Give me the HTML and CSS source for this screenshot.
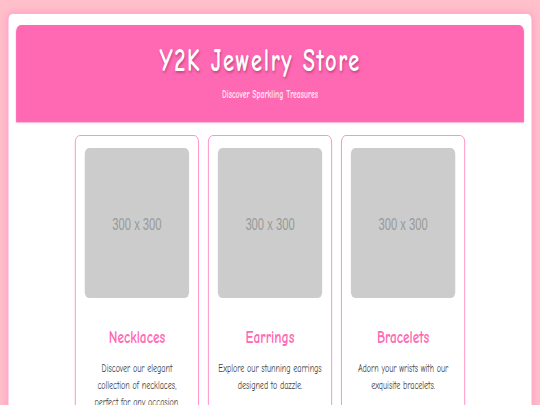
FILE: index.html
```html
<!DOCTYPE html>
<html lang="en">
<head>
<meta charset="utf-8">
<title>Y2K Jewelry Store</title>
<link rel="stylesheet" href="styles.css">
</head>
<body>
<div class="page">
  <div class="container">
    <header class="header">
      <h1 class="title">Y2K Jewelry Store</h1>
      <p class="subtitle">Discover Sparkling Treasures</p>
    </header>
    <main class="products">
      <div class="card">
        <div class="ph">300 x 300</div>
        <h3 class="name">Necklaces</h3>
        <p class="desc">Discover our elegant collection of necklaces, perfect for any occasion.</p>
      </div>
      <div class="card">
        <div class="ph">300 x 300</div>
        <h3 class="name">Earrings</h3>
        <p class="desc">Explore our stunning earrings designed to dazzle.</p>
      </div>
      <div class="card">
        <div class="ph">300 x 300</div>
        <h3 class="name">Bracelets</h3>
        <p class="desc">Adorn your wrists with our exquisite bracelets.</p>
      </div>
    </main>
  </div>
</div>
</body>
</html>
```
FILE: styles.css
```css
* { box-sizing: border-box; }
html { overflow: hidden; }
html, body { margin: 0; padding: 0; }
body {
  background: #ffc0cb;
  font-family: "Comic Neue", "Comic Sans MS", cursive;
  height: 405px;
  overflow: hidden;
}
.page {
  width: 771px;
  padding: 13px 11px 0 11px;
  transform: scaleX(0.7004);
  transform-origin: 0 0;
}
.container {
  background: #fff;
  border: 1px solid #ffa8cf;
  border-radius: 7px;
  box-shadow: 0 0 10px rgba(255, 105, 180, 0.4);
  padding: 11px 11px 0 11px;
  height: 430px;
}
.header {
  background: #ff69b4;
  border-radius: 7px 7px 0 0;
  box-shadow: 0 1px 2px rgba(210, 70, 140, 0.45);
  height: 97px;
  text-align: center;
  padding-top: 17px;
}
.title {
  margin: 0;
  padding-right: 28px;
  color: #fff;
  font-size: 32px;
  font-weight: bold;
  letter-spacing: 2.3px;
  line-height: 38px;
  text-shadow: 1px 2px 3px rgba(150, 40, 90, 0.55);
}
.subtitle {
  margin: 8px 0 0 0;
  color: #ffe4f1;
  font-size: 11px;
  font-weight: bold;
  line-height: 13px;
}
.products {
  display: flex;
  justify-content: center;
  gap: 13px;
  padding-top: 13px;
}
.card {
  width: 177px;
  border: 1px solid #ff7fc0;
  border-radius: 7px;
  padding: 12px 13px 10px 13px;
  text-align: center;
}
.ph {
  height: 150px;
  background: #cccccc;
  border-radius: 6px;
  display: flex;
  align-items: center;
  justify-content: center;
  color: #999999;
  font-family: "Liberation Sans", Arial, sans-serif;
  font-size: 16px;
  padding-top: 3px;
}
.name {
  margin: 28px 0 0 0;
  color: #ff69b4;
  font-size: 19px;
  font-weight: bold;
  line-height: 22px;
}
.desc {
  margin: 12px 0 0 0;
  color: #3f3f3f;
  font-size: 11.5px;
  line-height: 17px;
}
```
